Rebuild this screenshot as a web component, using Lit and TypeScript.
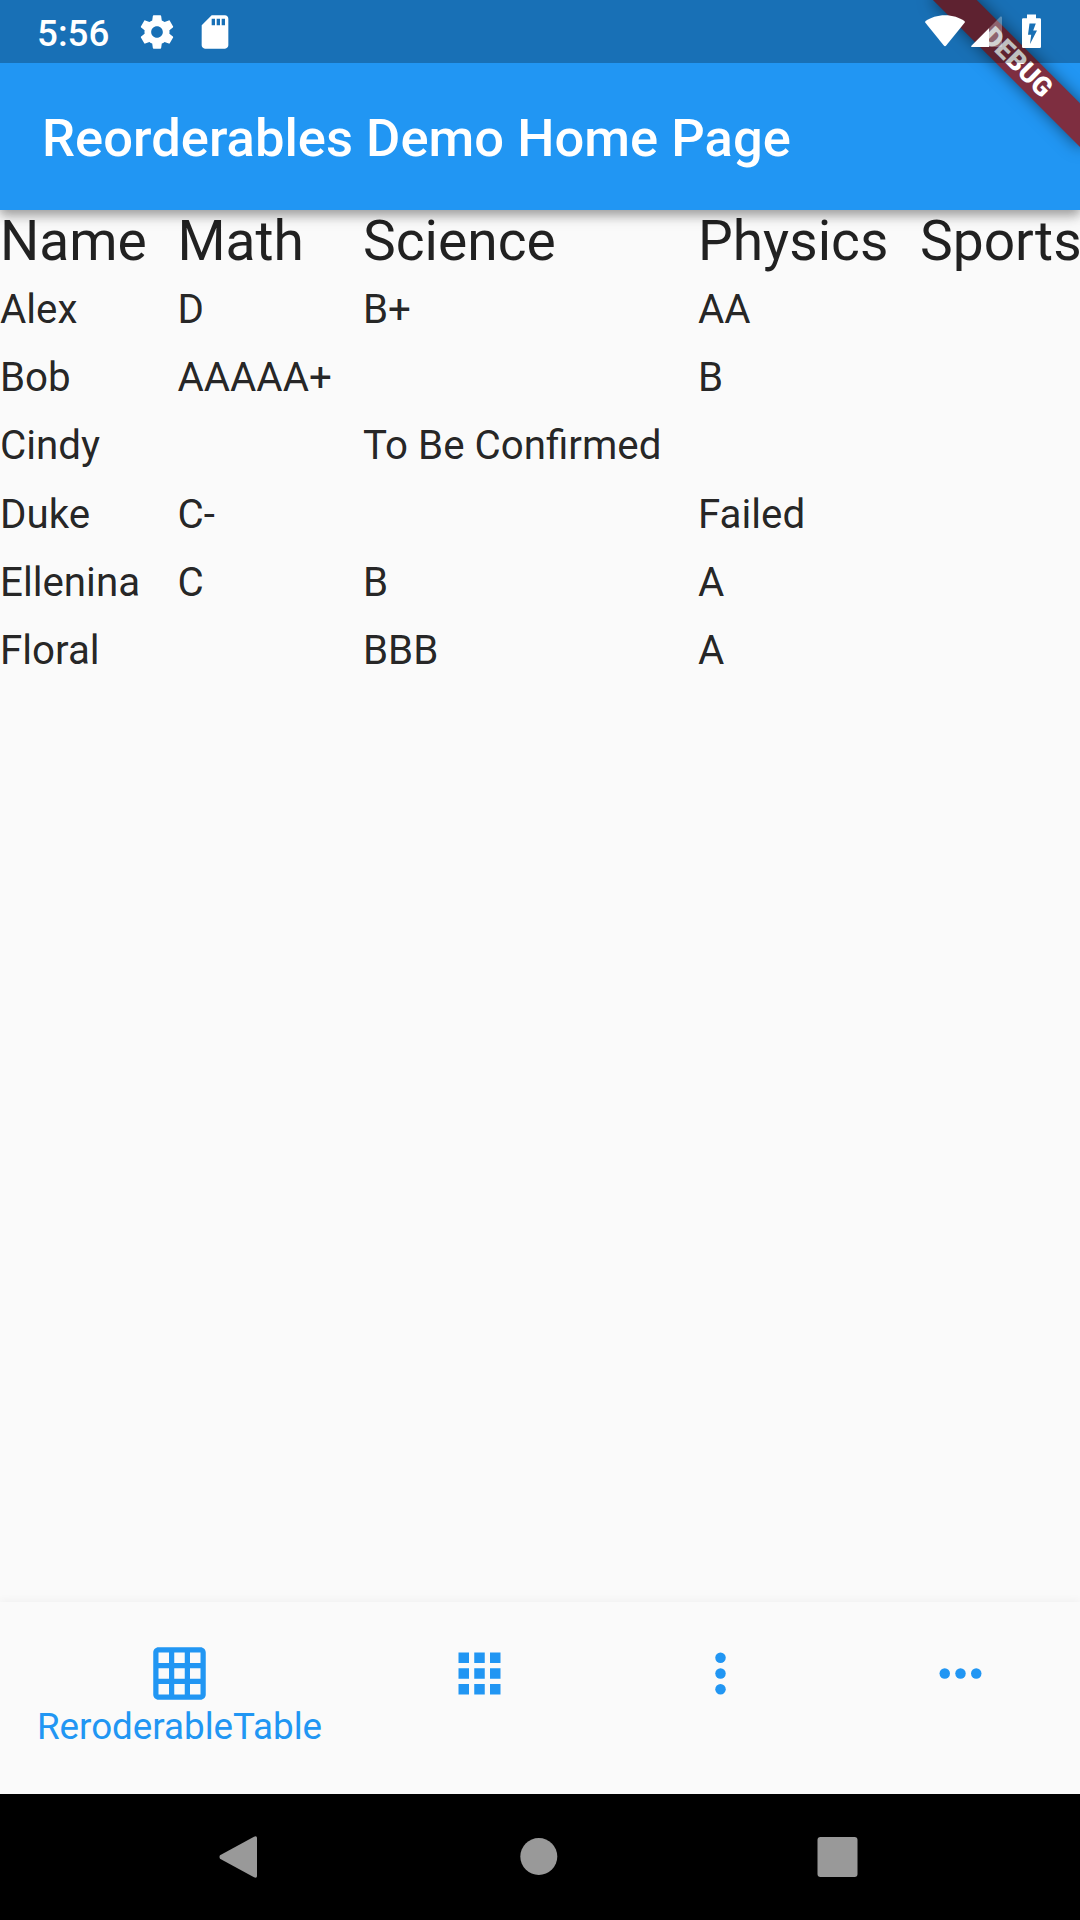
import { LitElement, html, css, svg } from "lit";
import { customElement } from "lit/decorators.js";

const COLUMNS = ["Name", "Math", "Science", "Physics", "Sports"];
const ROWS = [
  ["Alex", "D", "B+", "AA", ""],
  ["Bob", "AAAAA+", "", "B", ""],
  ["Cindy", "", "To Be Confirmed", "", ""],
  ["Duke", "C-", "", "Failed", ""],
  ["Ellenina", "C", "B", "A", ""],
  ["Floral", "", "BBB", "A", ""],
];

const TABS = [
  {
    label: "ReroderableTable",
    icon: svg`<path d="M20 2H4c-1.100 0-2 .9-2 2v16c0 1.100.9 2 2 2h16c1.100 0 2-.9 2-2V4c0-1.100-.9-2-2-2zM8 20H4v-4h4v4zm0-6H4v-4h4v4zm0-6H4V4h4v4zm6 12h-4v-4h4v4zm0-6h-4v-4h4v4zm0-6h-4V4h4v4zm6 12h-4v-4h4v4zm0-6h-4v-4h4v4zm0-6h-4V4h4v4z"/>`,
  },
  {
    label: "",
    icon: svg`<path d="M4 8h4V4H4v4zm6 12h4v-4h-4v4zm-6 0h4v-4H4v4zm0-6h4v-4H4v4zm6 0h4v-4h-4v4zm6-10v4h4V4h-4zm-6 4h4V4h-4v4zm6 6h4v-4h-4v4zm0 6h4v-4h-4v4z"/>`,
  },
  {
    label: "",
    icon: svg`<circle cx="12" cy="6" r="2"/><circle cx="12" cy="12" r="2"/><circle cx="12" cy="18" r="2"/>`,
  },
  {
    label: "",
    icon: svg`<circle cx="6" cy="12" r="2"/><circle cx="12" cy="12" r="2"/><circle cx="18" cy="12" r="2"/>`,
  },
];

@customElement("status-bar")
class StatusBar extends LitElement {
  static styles = css`
    :host {
      display: flex;
      box-sizing: border-box;
      height: 63px;
      padding: 0 39px 0 37px;
      align-items: center;
      justify-content: space-between;
      background: rgba(0, 0, 0, 0.25);
      color: #fff;
    }
    .group { display: flex; align-items: center; height: 63px; }
    .time {
      font: 500 36.75px/43px Roboto, sans-serif;
      width: 100px;
      padding-top: 4px;
    }
    .icon { display: block; fill: #fff; }
    .gear { margin-right: 18px; }
    .wifi { margin-right: 6px; }
    .signal { margin-right: 19px; }
  `;
  render() {
    return html`
      <div class="group">
        <span class="time">5:56</span>
        <svg class="icon gear" width="40" height="40" viewBox="0 0 24 24">
          <path d="M19.430 12.980c.04-.32.07-.64.07-.98s-.03-.66-.07-.98l2.110-1.650c.19-.15.24-.42.12-.64l-2-3.460c-.12-.22-.39-.3-.61-.22l-2.490 1c-.52-.4-1.080-.73-1.690-.98l-.38-2.650C14.460 2.180 14.250 2 14 2h-4c-.25 0-.46.18-.49.42l-.38 2.650c-.61.25-1.170.59-1.690.98l-2.490-1c-.23-.09-.49 0-.61.22l-2 3.460c-.13.22-.07.49.12.64l2.110 1.650c-.04.32-.07.65-.07.98s.03.66.07.98l-2.110 1.650c-.19.15-.24.42-.12.64l2 3.460c.12.22.39.3.61.22l2.490-1c.52.4 1.080.73 1.690.98l.38 2.650c.03.24.24.42.49.42h4c.25 0 .46-.18.49-.42l.38-2.650c.61-.25 1.170-.59 1.690-.98l2.490 1c.23.09.49 0 .61-.22l2-3.460c.12-.22.07-.49-.12-.64l-2.110-1.650zM12 15.500c-1.930 0-3.500-1.570-3.500-3.500s1.570-3.500 3.500-3.500 3.500 1.570 3.500 3.500-1.570 3.500-3.500 3.500z"/>
        </svg>
        <svg class="icon" width="40" height="40" viewBox="0 0 24 24">
          <path d="M18 2h-8L4.020 8 4 20c0 1.100.9 2 2 2h12c1.100 0 2-.9 2-2V4c0-1.100-.9-2-2-2zm-6 6h-2V4h2v4zm3 0h-2V4h2v4zm3 0h-2V4h2v4z"/>
        </svg>
      </div>
      <div class="group">
        <svg class="icon wifi" width="40" height="34" viewBox="0 0 40 34">
          <path d="M20 0.200C12.500 0.200 5.500 2.600 0.600 6Q-0.200 6.800 0.400 7.800L18.600 30.300Q20 32 21.400 30.300L39.600 7.800Q40.200 6.800 39.400 6C34.500 2.600 27.500 0.200 20 0.200Z"/>
        </svg>
        <svg class="icon signal" width="32" height="32" viewBox="0 0 32 32">
          <path d="M0.500 29.800L29.500 0.600Q31 0 31 1.600V30Q31 31 30 31H1Q-0.500 31 0.500 29.800Z" fill-opacity="0.3"/>
          <path d="M0.500 29.800L18 12.200V31H1Q-0.500 31 0.500 29.800Z"/>
        </svg>
        <svg class="icon" width="19" height="36" viewBox="0 -1 19 36">
          <path fill-rule="evenodd" d="M5 -0.500H14V3.200H17.800Q19 3.200 19 4.400V31.800Q19 33 17.800 33H1.200Q0 33 0 31.800V4.400Q0 3.200 1.200 3.200H5ZM7.500 8.500L6 19.700H9.200L8 29L15 15.500H11.200L13.800 8.500Z"/>
        </svg>
      </div>
    `;
  }
}

@customElement("grade-table")
class GradeTable extends LitElement {
  static styles = css`
    :host { display: block; color: rgba(0, 0, 0, 0.87); }
    .row {
      display: grid;
      grid-template-columns: 177.500px 185.500px 335px 222px 1fr;
      height: 68.250px;
      align-items: center;
      font: 400 40.300px/47px Roboto, sans-serif;
      white-space: nowrap;
    }
    .header {
      height: 65.250px;
      align-items: start;
      font-size: 55.125px;
      line-height: 62px;
    }
  `;
  render() {
    return html`
      <div class="row header">${COLUMNS.map((c) => html`<span>${c}</span>`)}</div>
      ${ROWS.map(
        (r) => html`<div class="row">${r.map((c) => html`<span>${c}</span>`)}</div>`
      )}
    `;
  }
}

@customElement("tab-bar")
class TabBar extends LitElement {
  static styles = css`
    :host {
      display: grid;
      grid-template-columns: 359px 241px 240px 240px;
      box-sizing: border-box;
      height: 192px;
      padding-top: 40px;
      background: #fafafa;
      box-shadow: 0 -2px 8px rgba(0, 0, 0, 0.04);
    }
    .tab { display: flex; flex-direction: column; align-items: center; color: #2196f3; }
    .icon { display: block; width: 63px; height: 63px; fill: #2196f3; }
    .label { font: 400 36.750px/43px Roboto, sans-serif; }
  `;
  render() {
    return TABS.map(
      (t) => html`<div class="tab">
        <svg class="icon" viewBox="0 0 24 24">${t.icon}</svg>
        <span class="label">${t.label}</span>
      </div>`
    );
  }
}

@customElement("system-nav")
class SystemNav extends LitElement {
  static styles = css`
    :host {
      display: flex;
      height: 126px;
      align-items: center;
      background: #000;
      justify-content: center;
      padding-right: 2px;
    }
    .slot { width: 299px; display: flex; justify-content: center; }
    .icon { display: block; fill: #999; }
  `;
  render() {
    return html`
      <div class="slot">
        <svg class="icon" width="42" height="42" viewBox="0 0 42 42">
          <path d="M1 19.300L35 0.700Q38 -0.500 38 2V40Q38 42.500 35 41.300L1 22.700Q0 21 1 19.300Z"/>
        </svg>
      </div>
      <div class="slot">
        <svg class="icon" width="42" height="42" viewBox="0 0 42 42"><circle cx="20.800" cy="20.500" r="18.500"/></svg>
      </div>
      <div class="slot">
        <svg class="icon" width="42" height="42" viewBox="0 0 42 42"><rect x="0.500" y="1" width="40" height="40" rx="3"/></svg>
      </div>
    `;
  }
}

@customElement("app-root")
class AppRoot extends LitElement {
  static styles = css`
    :host {
      display: flex;
      flex-direction: column;
      position: relative;
      width: 1080px;
      height: 1920px;
      overflow: hidden;
      background: #fafafa;
      font-family: Roboto, sans-serif;
    }
    .top {
      position: relative;
      height: 210px;
      flex: none;
      background: #2196f3;
      box-shadow: 0 5px 10px rgba(0, 0, 0, 0.22), 0 9px 13px rgba(0, 0, 0, 0.1),
        0 2px 10px rgba(0, 0, 0, 0.12);
    }
    .status { position: relative; z-index: 2; }
    .title {
      margin: 0;
      padding-left: 42px;
      color: #fff;
      font-size: 52.500px;
      font-weight: 500;
      letter-spacing: 0.03px;
      line-height: 150px;
      height: 147px;
      white-space: nowrap;
    }
    .ribbon {
      position: absolute;
      z-index: 1;
      left: 975px;
      top: 73px;
      width: 210px;
      height: 31px;
      transform-origin: 105px -73px;
      transform: rotate(45deg);
      background: #7e2e40;
      box-shadow: 0 0 16px rgba(0, 0, 0, 0.5);
      color: #fff;
      font-size: 26.800px;
      font-weight: 900;
      line-height: 31px;
      text-align: center;
    }
    .body { flex: 1; }
  `;
  render() {
    return html`
      <header class="top">
        <status-bar class="status"></status-bar>
        <h1 class="title">Reorderables Demo Home Page</h1>
        <div class="ribbon">DEBUG</div>
      </header>
      <grade-table class="body"></grade-table>
      <tab-bar></tab-bar>
      <system-nav></system-nav>
    `;
  }
}
